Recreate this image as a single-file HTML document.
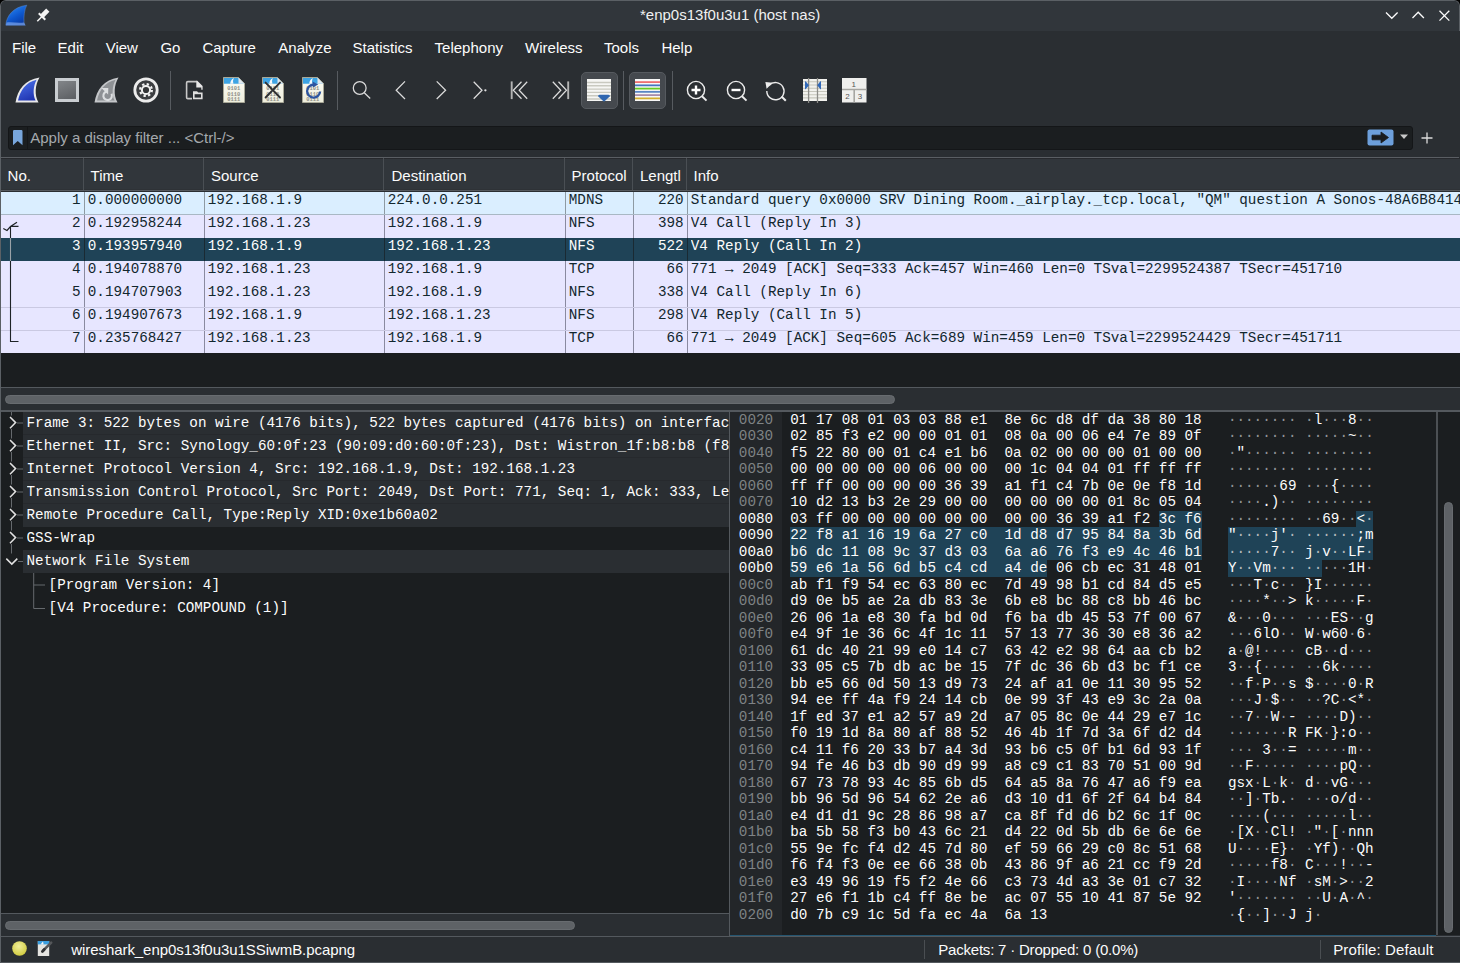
<!DOCTYPE html><html><head><meta charset="utf-8"><style>
*{margin:0;padding:0;box-sizing:border-box}
html,body{width:1460px;height:963px;overflow:hidden;background:#000}
body{position:relative;font-family:"Liberation Sans", sans-serif;color:#fcfcfc}
.a{position:absolute}
.m{font-family:"Liberation Mono", monospace;font-size:14.2977px;line-height:16.5px;white-space:pre}
i{font-style:normal;color:#909396}
.s{font-family:"Liberation Sans", sans-serif;font-size:15px;white-space:pre}
</style></head><body>
<div class="a" style="left:0;top:0;width:1460px;height:963px;background:#2a2e32;border-radius:6px 6px 0 0;border:1px solid #5b6065;border-bottom:none"></div>
<div class="a" style="left:1px;top:1px;width:1458px;height:30px;background:#31363b;border-radius:5px 5px 0 0"></div>
<div class="a" style="left:1459px;top:31px;width:1px;height:932px;background:#2a2e32"></div>
<div class="a s" style="left:640px;top:5.8px;font-size:15px;color:#eff0f1">*enp0s13f0u3u1 (host nas)</div>
<svg class="a" style="left:4px;top:3px" width="25" height="24" viewBox="0 0 25 24">
<defs><linearGradient id="fin" x1="0.2" y1="0" x2="0.8" y2="1"><stop offset="0" stop-color="#2a8af6"/><stop offset="0.55" stop-color="#0d56cc"/><stop offset="1" stop-color="#07349a"/></linearGradient></defs>
<path d="M1.8,22.2 C2.5,13 9,4 22.8,2.2 C20.3,6 19.6,14 20,19.5 C20.2,21 20.8,21.8 21.3,22.2 Z" fill="url(#fin)" stroke="#5a8ad0" stroke-width="0.5"/>
<path d="M2,22.2 L2.5,19.6 C8,18.8 14,20.4 20.1,19.4 L21.3,22.2Z" fill="#86aef0" opacity="0.65"/>
</svg>
<svg class="a" style="left:35px;top:7px" width="17" height="17" viewBox="35 7 17 17">
<path d="M37.3,21.2 L41.8,16.7" stroke="#f4f4f4" stroke-width="1.5"/>
<path d="M38.8,13.2 L45.3,19.7" stroke="#f4f4f4" stroke-width="2"/>
<path d="M42.2,15.8 L47.8,10.2" stroke="#f4f4f4" stroke-width="4.6"/>
</svg>
<svg class="a" style="left:1380px;top:5px" width="75" height="20" viewBox="0 0 75 20">
<path d="M6,7.5 L11.8,13.3 L17.6,7.5" stroke="#fcfcfc" stroke-width="1.3" fill="none"/>
<path d="M32.5,13 L38.2,7.2 L43.9,13" stroke="#fcfcfc" stroke-width="1.3" fill="none"/>
<path d="M59.5,5.8 L69.3,15.6 M69.3,5.8 L59.5,15.6" stroke="#fcfcfc" stroke-width="1.3" fill="none"/>
</svg>
<div class="a s" style="left:12.0px;top:38.7px;color:#fcfcfc">File</div>
<div class="a s" style="left:57.6px;top:38.7px;color:#fcfcfc">Edit</div>
<div class="a s" style="left:105.7px;top:38.7px;color:#fcfcfc">View</div>
<div class="a s" style="left:160.4px;top:38.7px;color:#fcfcfc">Go</div>
<div class="a s" style="left:202.4px;top:38.7px;color:#fcfcfc">Capture</div>
<div class="a s" style="left:278.3px;top:38.7px;color:#fcfcfc">Analyze</div>
<div class="a s" style="left:352.5px;top:38.7px;color:#fcfcfc">Statistics</div>
<div class="a s" style="left:434.6px;top:38.7px;color:#fcfcfc">Telephony</div>
<div class="a s" style="left:525.1px;top:38.7px;color:#fcfcfc">Wireless</div>
<div class="a s" style="left:604.0px;top:38.7px;color:#fcfcfc">Tools</div>
<div class="a s" style="left:661.4px;top:38.7px;color:#fcfcfc">Help</div>
<div class="a" style="left:170px;top:71px;width:1px;height:39px;background:#575b60"></div>
<div class="a" style="left:337px;top:71px;width:1px;height:39px;background:#575b60"></div>
<div class="a" style="left:623px;top:71px;width:1px;height:39px;background:#575b60"></div>
<div class="a" style="left:672px;top:71px;width:1px;height:39px;background:#575b60"></div>
<svg class="a" style="left:14px;top:76px" width="27" height="28" viewBox="0 0 27 28">
<defs><linearGradient id="fin2" x1="0.3" y1="0" x2="0.7" y2="1"><stop offset="0" stop-color="#4a70e8"/><stop offset="1" stop-color="#1f33b0"/></linearGradient></defs>
<path d="M1.5,26.5 C3.5,14 11,3.5 25.5,1.5 C21,9 20.3,19 24.5,26.5 Z" fill="#e8e8ea"/>
<path d="M4,24.5 C6,15 12,6 22.6,3.8 C19.2,10 18.6,19 21.6,24.5 Z" fill="url(#fin2)"/>
</svg>
<svg class="a" style="left:55px;top:78px" width="24" height="24" viewBox="0 0 24 24">
<defs><linearGradient id="stopg" x1="0.3" y1="0" x2="0.7" y2="1"><stop offset="0" stop-color="#7f8286"/><stop offset="1" stop-color="#5e6165"/></linearGradient></defs>
<rect x="0" y="0" width="24" height="24" fill="#c9cdd1"/>
<rect x="3" y="3" width="18" height="18" fill="url(#stopg)"/>
</svg>
<svg class="a" style="left:93px;top:76px" width="27" height="28" viewBox="0 0 27 28">
<path d="M1.5,26.5 C3.5,14 11,3.5 25.5,1.5 C21,9 20.3,19 24.5,26.5 Z" fill="#c4c6c9"/>
<path d="M4,24.5 C6,15 12,6 22.6,3.8 C19.2,10 18.6,19 21.6,24.5 Z" fill="#8e9195"/>
<path d="M14.5,15.4 A4.3,4.3 0 1 0 18.5,17.8" stroke="#dcdee0" stroke-width="2.1" fill="none"/>
<path d="M8.4,12 L15.3,12 L15.1,18.6Z" fill="#dcdee0"/>
</svg>
<svg class="a" style="left:133px;top:77px" width="26" height="26" viewBox="0 0 26 26">
<circle cx="13" cy="13" r="11.2" stroke="#ececec" stroke-width="2.8" fill="#3c3e41"/>
<circle cx="13" cy="13" r="5.9" stroke="#f2f2f2" stroke-width="2.2" fill="none" stroke-dasharray="2.3 2.33"/>
<circle cx="13" cy="13" r="4.1" stroke="#f2f2f2" stroke-width="2" fill="#333537"/>
</svg>
<svg class="a" style="left:185px;top:80px" width="18" height="20" viewBox="0 0 18 20">
<path d="M7,18.6 H2.8 Q1.6,18.6 1.6,17.4 V2.8 Q1.6,1.6 2.8,1.6 H11.8" stroke="#c8c8c8" stroke-width="1.6" fill="none"/>
<path d="M11.3,0.8 L12.3,0.8 L17.6,6.1 L17.6,9.8 L16.3,9.8 L16.3,7.6 L11.3,7.6Z" fill="#e8e8e8"/>
<path d="M8,19.2 V11.2 H12 L13.3,12.4 H17.6 V19.2 Z" fill="#e0e0e0"/>
<rect x="9.6" y="14.2" width="6.4" height="3.4" fill="#2a2e32"/>
</svg>
<svg class="a" style="left:223px;top:77px" width="23" height="26" viewBox="0 0 23 26">
<defs><linearGradient id="dg223" x1="0" y1="0" x2="0" y2="1"><stop offset="0" stop-color="#fdfdf6"/><stop offset="1" stop-color="#ededdc"/></linearGradient></defs>
<path d="M0.5,0.5 L15.5,0.5 L21.5,6.5 L21.5,25.5 L0.5,25.5 Z" fill="url(#dg223)" stroke="#a8a898" stroke-width="1"/>
<path d="M1,1 L15.3,1 L21,6.7 L1,6.7 Z" fill="#3ea4e4"/>
<path d="M7.2,6.7 Q7.6,2.6 10.8,1 Q9.4,4.2 10.4,6.7Z" fill="#f4f8fc"/>
<path d="M15.5,0.8 L15.5,6.7 L21.2,6.7Z" fill="#e2e8ee"/>
<g font-family="Liberation Mono" font-size="5.4" font-weight="bold" fill="#8e8e86"><text x="4.2" y="13.3">0101</text><text x="4.2" y="18.7">0110</text><text x="4.2" y="23.8">0111</text></g>
</svg>
<svg class="a" style="left:262px;top:77px" width="23" height="26" viewBox="0 0 23 26">
<defs><linearGradient id="dg262" x1="0" y1="0" x2="0" y2="1"><stop offset="0" stop-color="#fdfdf6"/><stop offset="1" stop-color="#ededdc"/></linearGradient></defs>
<path d="M0.5,0.5 L15.5,0.5 L21.5,6.5 L21.5,25.5 L0.5,25.5 Z" fill="url(#dg262)" stroke="#a8a898" stroke-width="1"/>
<path d="M1,1 L15.3,1 L21,6.7 L1,6.7 Z" fill="#3ea4e4"/>
<path d="M7.2,6.7 Q7.6,2.6 10.8,1 Q9.4,4.2 10.4,6.7Z" fill="#f4f8fc"/>
<path d="M15.5,0.8 L15.5,6.7 L21.2,6.7Z" fill="#e2e8ee"/>
<g font-family="Liberation Mono" font-size="5.4" font-weight="bold" fill="#8e8e86"><text x="4.2" y="13.3">0101</text><text x="4.2" y="18.7">0110</text><text x="4.2" y="23.8">0111</text></g>
<path d="M3.6,5.6 L18,20.5 M18,5.6 L3.6,20.5" stroke="#2e3032" stroke-width="1.9" stroke-linecap="round"/></svg>
<svg class="a" style="left:302px;top:77px" width="23" height="26" viewBox="0 0 23 26">
<defs><linearGradient id="dg302" x1="0" y1="0" x2="0" y2="1"><stop offset="0" stop-color="#fdfdf6"/><stop offset="1" stop-color="#ededdc"/></linearGradient></defs>
<path d="M0.5,0.5 L15.5,0.5 L21.5,6.5 L21.5,25.5 L0.5,25.5 Z" fill="url(#dg302)" stroke="#a8a898" stroke-width="1"/>
<path d="M1,1 L15.3,1 L21,6.7 L1,6.7 Z" fill="#3ea4e4"/>
<path d="M7.2,6.7 Q7.6,2.6 10.8,1 Q9.4,4.2 10.4,6.7Z" fill="#f4f8fc"/>
<path d="M15.5,0.8 L15.5,6.7 L21.2,6.7Z" fill="#e2e8ee"/>
<g font-family="Liberation Mono" font-size="5.4" font-weight="bold" fill="#8e8e86"><text x="4.2" y="13.3">0101</text><text x="4.2" y="18.7">0110</text><text x="4.2" y="23.8">0111</text></g>
<path d="M11.6,7.6 A6.5,6.5 0 1 0 18.1,14.5" stroke="#2c54a0" stroke-width="2.3" fill="none"/><path d="M10.6,4.4 L16.2,7.6 L10.8,10.6Z" fill="#2c54a0"/></svg>
<svg class="a" style="left:350px;top:78px" width="24" height="24" viewBox="0 0 24 24">
<circle cx="9.7" cy="10" r="6.4" stroke="#dcdcdc" stroke-width="1.25" fill="none"/><path d="M14.3,14.8 L20.2,20.5" stroke="#dcdcdc" stroke-width="1.25" fill="none" stroke-width="1.5"/></svg>
<svg class="a" style="left:390px;top:77.7px" width="24" height="24" viewBox="0 0 24 24"><path d="M15,3.4 L6.2,12.3 L15,21" stroke="#dcdcdc" stroke-width="1.25" fill="none"/></svg>
<svg class="a" style="left:430px;top:77.7px" width="24" height="24" viewBox="0 0 24 24"><path d="M6.7,3.4 L15.6,12.3 L6.7,21" stroke="#dcdcdc" stroke-width="1.25" fill="none"/></svg>
<svg class="a" style="left:468px;top:77.7px" width="24" height="24" viewBox="0 0 24 24"><path d="M5.7,3.8 L14,12.3 L5.7,20.8" stroke="#dcdcdc" stroke-width="1.25" fill="none"/><circle cx="17.4" cy="12.3" r="1.15" fill="#e0e0e0"/></svg>
<svg class="a" style="left:508px;top:77.7px" width="24" height="24" viewBox="0 0 24 24"><path d="M3.7,3.4 V21.1" stroke="#b4b4b4" stroke-width="1.9"/><path d="M13.5,3.8 L5.3,12.3 L13.5,20.8 M19.2,3.8 L11.2,12.3 L19.2,20.8" stroke="#dcdcdc" stroke-width="1.25" fill="none"/></svg>
<svg class="a" style="left:549px;top:77.7px" width="24" height="24" viewBox="0 0 24 24"><path d="M19.2,3.4 V21.1" stroke="#b4b4b4" stroke-width="1.9"/><path d="M3.8,3.8 L11.8,12.3 L3.8,20.8 M9.5,3.8 L17.5,12.3 L9.5,20.8" stroke="#dcdcdc" stroke-width="1.25" fill="none"/></svg>
<div class="a" style="left:581px;top:72px;width:37px;height:37px;border-radius:5px;background:#45494e;border:1px solid #565a5f"></div>
<div class="a" style="left:629px;top:72px;width:37px;height:37px;border-radius:5px;background:#45494e;border:1px solid #565a5f"></div>
<svg class="a" style="left:587px;top:79px" width="24" height="23" viewBox="0 0 24 23">
<rect x="0" y="0" width="24" height="22" fill="#f6f6f4"/>
<g stroke="#c9c9c0" stroke-width="1.4"><path d="M0,3.5 H24 M0,6.8 H24 M0,10.1 H24 M0,13.4 H24 M0,16.7 H24 M0,20 H24"/></g>
<path d="M11,17.3 Q11,15.8 12.5,15.8 L21.5,15.8 Q23,15.8 23,17.3 L17,22.8 Z" fill="#2f66b0"/>
</svg>
<svg class="a" style="left:635px;top:79px" width="25" height="23" viewBox="0 0 25 23">
<rect x="0" y="0" width="25" height="22" fill="#f8f8f8"/>
<g stroke-width="1.8"><path d="M0,3.1 H25" stroke="#ee7070"/><path d="M0,6.35 H25" stroke="#4576c0"/><path d="M0,9.6 H25" stroke="#66cc22"/><path d="M0,12.85 H25" stroke="#5a86c4"/><path d="M0,16.1 H25" stroke="#a88cac"/><path d="M0,19.4 H25" stroke="#d4ae2e"/></g>
</svg>
<svg class="a" style="left:684px;top:78px" width="26" height="26" viewBox="0 0 26 26">
<circle cx="12" cy="12" r="8.6" stroke="#ececec" stroke-width="1.4" fill="none"/><path d="M18,18.2 L22.5,22.6" stroke="#ececec" stroke-width="2" /><path d="M7.5,12 H16.5 M12,7.5 V16.5" stroke="#ffffff" stroke-width="2.4"/></svg>
<svg class="a" style="left:724px;top:78px" width="26" height="26" viewBox="0 0 26 26">
<circle cx="12" cy="12" r="8.6" stroke="#ececec" stroke-width="1.4" fill="none"/><path d="M18,18.2 L22.5,22.6" stroke="#ececec" stroke-width="2" /><path d="M7.5,12 H16.5" stroke="#ffffff" stroke-width="2.4"/></svg>
<svg class="a" style="left:763px;top:78px" width="26" height="26" viewBox="0 0 26 26">
<path d="M6.2,7.2 A8.6,8.6 0 1 1 3.8,13" stroke="#ececec" stroke-width="1.4" fill="none"/><path d="M18.5,18.5 L22.8,22.8" stroke="#ececec" stroke-width="2"/><path d="M2.4,4 L9.8,4.8 L3.6,10.8Z" fill="#ececec"/></svg>
<svg class="a" style="left:802px;top:78px" width="26" height="25" viewBox="0 0 26 25">
<rect x="1" y="1" width="24" height="22" fill="#f2f2ee"/>
<g stroke="#c6c6bc" stroke-width="1.1"><path d="M1,3.8 H25 M1,7 H25 M1,10.3 H25 M1,13.5 H25 M1,16.7 H25 M1,19.9 H25"/></g>
<path d="M6.6,0 V25 M15.5,0 V25" stroke="#8c8c88" stroke-width="1.3"/>
<path d="M3,3.5 Q3,3 3.6,3.3 L7,7.3 L3.6,11.2 Q3,11.5 3,11Z M19,3.5 Q19,3 18.4,3.3 L15.2,7.3 L18.4,11.2 Q19,11.5 19,11Z" fill="#3068b8"/>
</svg>
<svg class="a" style="left:841px;top:77px" width="26" height="26" viewBox="0 0 26 26">
<rect x="1" y="1" width="24.5" height="24.5" fill="#efefed"/>
<path d="M1,12.5 H25.5 M13.2,12.5 V25.5" stroke="#a6a6a2" stroke-width="1.6"/>
<g font-family="Liberation Sans" font-size="8" fill="#555"><text x="10.5" y="9.5">1</text><text x="4.3" y="22">2</text><text x="16.8" y="22">3</text></g>
</svg>
<div class="a" style="left:8px;top:126px;width:1405px;height:24px;background:#1b1e20;border:1px solid #141618;border-radius:3px"></div>
<div class="a" style="left:27px;top:127px;width:1px;height:22px;background:#141618"></div>
<svg class="a" style="left:13px;top:130px" width="10" height="16" viewBox="0 0 10 16"><path d="M0,1.2 Q0,0 1.2,0 H8.3 Q9.5,0 9.5,1.2 V15.2 L4.75,11 L0,15.2Z" fill="#78a6dc"/></svg>
<div class="a s" style="left:30.2px;top:129px;color:#a5a9ad">Apply a display filter ... &lt;Ctrl-/&gt;</div>
<svg class="a" style="left:1367px;top:129px" width="27" height="17" viewBox="0 0 27 17"><rect x="0.5" y="0.5" width="26" height="16" rx="2" fill="#6d9fdb"/><path d="M5,6.2 H14 V3 L21.5,8.5 L14,14 V10.8 H5Z" fill="#1a1c1e" stroke="#1a1c1e" stroke-width="0.8" stroke-linejoin="round"/></svg>
<svg class="a" style="left:1399px;top:134px" width="10" height="6" viewBox="0 0 10 6"><path d="M1,0.5 H9 L5,5Z" fill="#c8c8c8"/></svg>
<svg class="a" style="left:1420px;top:131px" width="14" height="14" viewBox="0 0 14 14"><path d="M1.5,7 H12.5 M7,1.5 V12.5" stroke="#dcdcdc" stroke-width="1.3"/></svg>
<div class="a" style="left:1px;top:157px;width:1458px;height:1px;background:#5a5e63"></div>
<div class="a" style="left:1px;top:158px;width:1459px;height:32px;background:#31363b"></div>
<div class="a" style="left:1px;top:158px;width:1459px;height:1px;background:#27292d"></div>
<div class="a" style="left:1px;top:189px;width:1459px;height:1px;background:#2e3236"></div>
<div class="a" style="left:1px;top:190px;width:1459px;height:1px;background:#55595e"></div>
<div class="a" style="left:1px;top:191px;width:1459px;height:1px;background:#2a2e32"></div>
<div class="a" style="left:83px;top:158px;width:1px;height:32px;background:#4a4f54"></div>
<div class="a" style="left:203px;top:158px;width:1px;height:32px;background:#4a4f54"></div>
<div class="a" style="left:383px;top:158px;width:1px;height:32px;background:#4a4f54"></div>
<div class="a" style="left:564px;top:158px;width:1px;height:32px;background:#4a4f54"></div>
<div class="a" style="left:632px;top:158px;width:1px;height:32px;background:#4a4f54"></div>
<div class="a" style="left:686px;top:158px;width:1px;height:32px;background:#4a4f54"></div>
<div class="a s" style="left:7.6px;top:166.6px;color:#fcfcfc">No.</div>
<div class="a s" style="left:90.6px;top:166.6px;color:#fcfcfc">Time</div>
<div class="a s" style="left:211.0px;top:166.6px;color:#fcfcfc">Source</div>
<div class="a s" style="left:391.5px;top:166.6px;color:#fcfcfc">Destination</div>
<div class="a s" style="left:571.6px;top:166.6px;color:#fcfcfc">Protocol</div>
<div class="a s" style="left:640.0px;top:166.6px;color:#fcfcfc">Lengtl</div>
<div class="a s" style="left:693.6px;top:166.6px;color:#fcfcfc">Info</div>
<div class="a" style="left:1px;top:192px;width:1459px;height:195px;background:#1b1e20"></div>
<div class="a" style="left:1px;top:192px;width:1459px;height:23px;background:#daeeff"></div>
<div class="a" style="left:84px;top:192px;width:1px;height:23px;background:#8e9aa3"></div>
<div class="a" style="left:204px;top:192px;width:1px;height:23px;background:#8e9aa3"></div>
<div class="a" style="left:384px;top:192px;width:1px;height:23px;background:#8e9aa3"></div>
<div class="a" style="left:565px;top:192px;width:1px;height:23px;background:#8e9aa3"></div>
<div class="a" style="left:633px;top:192px;width:1px;height:23px;background:#8e9aa3"></div>
<div class="a" style="left:687px;top:192px;width:1px;height:23px;background:#8e9aa3"></div>
<div class="a m" style="left:1px;width:79.7px;text-align:right;top:191.9px;color:#12272e">1</div>
<div class="a m" style="left:87.8px;top:191.9px;color:#12272e">0.000000000</div>
<div class="a m" style="left:207.8px;top:191.9px;color:#12272e">192.168.1.9</div>
<div class="a m" style="left:387.8px;top:191.9px;color:#12272e">224.0.0.251</div>
<div class="a m" style="left:568.8px;top:191.9px;color:#12272e">MDNS</div>
<div class="a m" style="left:634px;width:49.7px;text-align:right;top:191.9px;color:#12272e">220</div>
<div class="a m" style="left:690.8px;top:191.9px;width:770px;overflow:hidden;color:#12272e">Standard query 0x0000 SRV Dining Room._airplay._tcp.local, &quot;QM&quot; question A Sonos-48A6B8414D4A.local, &quot;QM&quot; question AAAA</div>
<div class="a" style="left:1px;top:215px;width:1459px;height:23px;background:#e7e6ff"></div>
<div class="a" style="left:84px;top:215px;width:1px;height:23px;background:#8a8aa0"></div>
<div class="a" style="left:204px;top:215px;width:1px;height:23px;background:#8a8aa0"></div>
<div class="a" style="left:384px;top:215px;width:1px;height:23px;background:#8a8aa0"></div>
<div class="a" style="left:565px;top:215px;width:1px;height:23px;background:#8a8aa0"></div>
<div class="a" style="left:633px;top:215px;width:1px;height:23px;background:#8a8aa0"></div>
<div class="a" style="left:687px;top:215px;width:1px;height:23px;background:#8a8aa0"></div>
<div class="a m" style="left:1px;width:79.7px;text-align:right;top:214.9px;color:#12272e">2</div>
<div class="a m" style="left:87.8px;top:214.9px;color:#12272e">0.192958244</div>
<div class="a m" style="left:207.8px;top:214.9px;color:#12272e">192.168.1.23</div>
<div class="a m" style="left:387.8px;top:214.9px;color:#12272e">192.168.1.9</div>
<div class="a m" style="left:568.8px;top:214.9px;color:#12272e">NFS</div>
<div class="a m" style="left:634px;width:49.7px;text-align:right;top:214.9px;color:#12272e">398</div>
<div class="a m" style="left:690.8px;top:214.9px;width:770px;overflow:hidden;color:#12272e">V4 Call (Reply In 3)</div>
<div class="a" style="left:1px;top:238px;width:1459px;height:23px;background:#1f4357"></div>
<div class="a" style="left:84px;top:238px;width:1px;height:23px;background:#1a2a33"></div>
<div class="a" style="left:204px;top:238px;width:1px;height:23px;background:#1a2a33"></div>
<div class="a" style="left:384px;top:238px;width:1px;height:23px;background:#1a2a33"></div>
<div class="a" style="left:565px;top:238px;width:1px;height:23px;background:#1a2a33"></div>
<div class="a" style="left:633px;top:238px;width:1px;height:23px;background:#1a2a33"></div>
<div class="a" style="left:687px;top:238px;width:1px;height:23px;background:#1a2a33"></div>
<div class="a m" style="left:1px;width:79.7px;text-align:right;top:237.9px;color:#fcfcfc">3</div>
<div class="a m" style="left:87.8px;top:237.9px;color:#fcfcfc">0.193957940</div>
<div class="a m" style="left:207.8px;top:237.9px;color:#fcfcfc">192.168.1.9</div>
<div class="a m" style="left:387.8px;top:237.9px;color:#fcfcfc">192.168.1.23</div>
<div class="a m" style="left:568.8px;top:237.9px;color:#fcfcfc">NFS</div>
<div class="a m" style="left:634px;width:49.7px;text-align:right;top:237.9px;color:#fcfcfc">522</div>
<div class="a m" style="left:690.8px;top:237.9px;width:770px;overflow:hidden;color:#fcfcfc">V4 Reply (Call In 2)</div>
<div class="a" style="left:1px;top:261px;width:1459px;height:23px;background:#e7e6ff"></div>
<div class="a" style="left:84px;top:261px;width:1px;height:23px;background:#8a8aa0"></div>
<div class="a" style="left:204px;top:261px;width:1px;height:23px;background:#8a8aa0"></div>
<div class="a" style="left:384px;top:261px;width:1px;height:23px;background:#8a8aa0"></div>
<div class="a" style="left:565px;top:261px;width:1px;height:23px;background:#8a8aa0"></div>
<div class="a" style="left:633px;top:261px;width:1px;height:23px;background:#8a8aa0"></div>
<div class="a" style="left:687px;top:261px;width:1px;height:23px;background:#8a8aa0"></div>
<div class="a m" style="left:1px;width:79.7px;text-align:right;top:260.9px;color:#12272e">4</div>
<div class="a m" style="left:87.8px;top:260.9px;color:#12272e">0.194078870</div>
<div class="a m" style="left:207.8px;top:260.9px;color:#12272e">192.168.1.23</div>
<div class="a m" style="left:387.8px;top:260.9px;color:#12272e">192.168.1.9</div>
<div class="a m" style="left:568.8px;top:260.9px;color:#12272e">TCP</div>
<div class="a m" style="left:634px;width:49.7px;text-align:right;top:260.9px;color:#12272e">66</div>
<div class="a m" style="left:690.8px;top:260.9px;width:770px;overflow:hidden;color:#12272e">771 → 2049 [ACK] Seq=333 Ack=457 Win=460 Len=0 TSval=2299524387 TSecr=451710</div>
<div class="a" style="left:1px;top:284px;width:1459px;height:23px;background:#e7e6ff"></div>
<div class="a" style="left:84px;top:284px;width:1px;height:23px;background:#8a8aa0"></div>
<div class="a" style="left:204px;top:284px;width:1px;height:23px;background:#8a8aa0"></div>
<div class="a" style="left:384px;top:284px;width:1px;height:23px;background:#8a8aa0"></div>
<div class="a" style="left:565px;top:284px;width:1px;height:23px;background:#8a8aa0"></div>
<div class="a" style="left:633px;top:284px;width:1px;height:23px;background:#8a8aa0"></div>
<div class="a" style="left:687px;top:284px;width:1px;height:23px;background:#8a8aa0"></div>
<div class="a m" style="left:1px;width:79.7px;text-align:right;top:283.9px;color:#12272e">5</div>
<div class="a m" style="left:87.8px;top:283.9px;color:#12272e">0.194707903</div>
<div class="a m" style="left:207.8px;top:283.9px;color:#12272e">192.168.1.23</div>
<div class="a m" style="left:387.8px;top:283.9px;color:#12272e">192.168.1.9</div>
<div class="a m" style="left:568.8px;top:283.9px;color:#12272e">NFS</div>
<div class="a m" style="left:634px;width:49.7px;text-align:right;top:283.9px;color:#12272e">338</div>
<div class="a m" style="left:690.8px;top:283.9px;width:770px;overflow:hidden;color:#12272e">V4 Call (Reply In 6)</div>
<div class="a" style="left:1px;top:307px;width:1459px;height:23px;background:#e7e6ff"></div>
<div class="a" style="left:84px;top:307px;width:1px;height:23px;background:#8a8aa0"></div>
<div class="a" style="left:204px;top:307px;width:1px;height:23px;background:#8a8aa0"></div>
<div class="a" style="left:384px;top:307px;width:1px;height:23px;background:#8a8aa0"></div>
<div class="a" style="left:565px;top:307px;width:1px;height:23px;background:#8a8aa0"></div>
<div class="a" style="left:633px;top:307px;width:1px;height:23px;background:#8a8aa0"></div>
<div class="a" style="left:687px;top:307px;width:1px;height:23px;background:#8a8aa0"></div>
<div class="a m" style="left:1px;width:79.7px;text-align:right;top:306.9px;color:#12272e">6</div>
<div class="a m" style="left:87.8px;top:306.9px;color:#12272e">0.194907673</div>
<div class="a m" style="left:207.8px;top:306.9px;color:#12272e">192.168.1.9</div>
<div class="a m" style="left:387.8px;top:306.9px;color:#12272e">192.168.1.23</div>
<div class="a m" style="left:568.8px;top:306.9px;color:#12272e">NFS</div>
<div class="a m" style="left:634px;width:49.7px;text-align:right;top:306.9px;color:#12272e">298</div>
<div class="a m" style="left:690.8px;top:306.9px;width:770px;overflow:hidden;color:#12272e">V4 Reply (Call In 5)</div>
<div class="a" style="left:1px;top:330px;width:1459px;height:23px;background:#e7e6ff"></div>
<div class="a" style="left:84px;top:330px;width:1px;height:23px;background:#8a8aa0"></div>
<div class="a" style="left:204px;top:330px;width:1px;height:23px;background:#8a8aa0"></div>
<div class="a" style="left:384px;top:330px;width:1px;height:23px;background:#8a8aa0"></div>
<div class="a" style="left:565px;top:330px;width:1px;height:23px;background:#8a8aa0"></div>
<div class="a" style="left:633px;top:330px;width:1px;height:23px;background:#8a8aa0"></div>
<div class="a" style="left:687px;top:330px;width:1px;height:23px;background:#8a8aa0"></div>
<div class="a m" style="left:1px;width:79.7px;text-align:right;top:329.9px;color:#12272e">7</div>
<div class="a m" style="left:87.8px;top:329.9px;color:#12272e">0.235768427</div>
<div class="a m" style="left:207.8px;top:329.9px;color:#12272e">192.168.1.23</div>
<div class="a m" style="left:387.8px;top:329.9px;color:#12272e">192.168.1.9</div>
<div class="a m" style="left:568.8px;top:329.9px;color:#12272e">TCP</div>
<div class="a m" style="left:634px;width:49.7px;text-align:right;top:329.9px;color:#12272e">66</div>
<div class="a m" style="left:690.8px;top:329.9px;width:770px;overflow:hidden;color:#12272e">771 → 2049 [ACK] Seq=605 Ack=689 Win=459 Len=0 TSval=2299524429 TSecr=451711</div>
<div class="a" style="left:1px;top:214px;width:1459px;height:1px;background:#a9b8c4"></div>
<div class="a" style="left:1px;top:307px;width:1459px;height:1px;background:#cac9e2"></div>
<div class="a" style="left:1px;top:330px;width:1459px;height:1px;background:#cac9e2"></div>
<svg class="a" style="left:0;top:215px" width="22" height="140" viewBox="0 0 22 140">
<path d="M3.3,13.5 L7,15.5 L10.5,11.5 L17,7.3 M11,11.3 H18.5" stroke="#1e2326" stroke-width="1.2" fill="none"/>
<path d="M10.5,11.5 V23" stroke="#1e2326" stroke-width="1.1"/>
<path d="M10.5,23 V46" stroke="#9aa2a8" stroke-width="1.1"/>
<path d="M10.5,46 V126.5 H18.5" stroke="#1e2326" stroke-width="1.1" fill="none"/>
</svg>
<div class="a" style="left:1px;top:387px;width:1459px;height:1px;background:#54595e"></div>
<div class="a" style="left:1px;top:388px;width:1459px;height:22px;background:#2a2e32"></div>
<div class="a" style="left:5px;top:395px;width:890px;height:9px;border-radius:4.5px;background:#5e6266;border:1px solid #686c70"></div>
<div class="a" style="left:1px;top:410px;width:1459px;height:2px;background:#54595e"></div>
<div class="a" style="left:1px;top:412px;width:728px;height:501px;background:#1b1e20"></div>
<div class="a" style="left:23px;top:412px;width:706px;height:23px;background:#2a2e32"></div>
<div class="a m" style="left:26.5px;top:415.1px;width:702.5px;overflow:hidden;color:#fcfcfc">Frame 3: 522 bytes on wire (4176 bits), 522 bytes captured (4176 bits) on interface enp0s13f0u3u1, id 0</div>
<div class="a" style="left:23px;top:435px;width:706px;height:23px;background:#2a2e32"></div>
<div class="a m" style="left:26.5px;top:438.1px;width:702.5px;overflow:hidden;color:#fcfcfc">Ethernet II, Src: Synology_60:0f:23 (90:09:d0:60:0f:23), Dst: Wistron_1f:b8:b8 (f8:0f:41:1f:b8:b8)</div>
<div class="a" style="left:23px;top:458px;width:706px;height:23px;background:#2a2e32"></div>
<div class="a m" style="left:26.5px;top:461.1px;width:702.5px;overflow:hidden;color:#fcfcfc">Internet Protocol Version 4, Src: 192.168.1.9, Dst: 192.168.1.23</div>
<div class="a" style="left:23px;top:481px;width:706px;height:23px;background:#2a2e32"></div>
<div class="a m" style="left:26.5px;top:484.1px;width:702.5px;overflow:hidden;color:#fcfcfc">Transmission Control Protocol, Src Port: 2049, Dst Port: 771, Seq: 1, Ack: 333, Len: 456</div>
<div class="a" style="left:23px;top:504px;width:706px;height:23px;background:#2a2e32"></div>
<div class="a m" style="left:26.5px;top:507.1px;width:702.5px;overflow:hidden;color:#fcfcfc">Remote Procedure Call, Type:Reply XID:0xe1b60a02</div>
<div class="a m" style="left:26.5px;top:530.1px;width:702.5px;overflow:hidden;color:#fcfcfc">GSS-Wrap</div>
<div class="a" style="left:23px;top:550px;width:706px;height:23px;background:#2a2e32"></div>
<div class="a m" style="left:26.5px;top:553.1px;width:702.5px;overflow:hidden;color:#fcfcfc">Network File System</div>
<div class="a m" style="left:48.6px;top:577.1px;color:#fcfcfc">[Program Version: 4]</div>
<div class="a m" style="left:48.6px;top:600.1px;color:#fcfcfc">[V4 Procedure: COMPOUND (1)]</div>
<svg class="a" style="left:0;top:412px" width="50" height="200" viewBox="0 412 50 200">
<path d="M11.5,412 V415.5 M11.5,429 V438.5 M11.5,452 V461.5 M11.5,475 V484.5 M11.5,498 V507.5 M11.5,521 V530.5 M11.5,544 V553.5" stroke="#65696d" stroke-width="1" fill="none"/>
<g stroke="#e2e2e2" stroke-width="1.5" fill="none"><path d="M10,417 L15.6,422.6 L10,428.2"/><path d="M10,440 L15.6,445.6 L10,451.2"/><path d="M10,463 L15.6,468.6 L10,474.2"/><path d="M10,486 L15.6,491.6 L10,497.2"/><path d="M10,509 L15.6,514.6 L10,520.2"/><path d="M10,532 L15.6,537.6 L10,543.2"/>
<path d="M6.3,558.6 L11.8,564.1 L17.3,558.6"/>
</g>
<g stroke="#65696d" stroke-width="1" fill="none">
<path d="M17,423 H23 M17,446 H23 M17,469 H23 M17,492 H23 M17,515 H23 M17,538 H23 M18,561.5 H23"/>
<path d="M33.7,573 V608.5 H45 M33.7,585 H45"/>
</g>
</svg>
<div class="a" style="left:23px;top:434px;width:706px;height:1px;background:#26292d"></div>
<div class="a" style="left:23px;top:457px;width:706px;height:1px;background:#26292d"></div>
<div class="a" style="left:23px;top:480px;width:706px;height:1px;background:#26292d"></div>
<div class="a" style="left:23px;top:503px;width:706px;height:1px;background:#26292d"></div>
<div class="a" style="left:1px;top:913px;width:729px;height:1px;background:#54595e"></div>
<div class="a" style="left:1px;top:914px;width:729px;height:22px;background:#2a2e32"></div>
<div class="a" style="left:5px;top:921px;width:570px;height:9px;border-radius:4.5px;background:#5e6266;border:1px solid #686c70"></div>
<div class="a" style="left:729px;top:412px;width:1px;height:524px;background:#54595e"></div>
<div class="a" style="left:730px;top:412px;width:730px;height:523px;background:#1b1e20"></div>
<div class="a" style="left:730px;top:412px;width:52px;height:523px;background:#232629"></div>
<div class="a" style="left:730px;top:935px;width:706px;height:1px;background:#245570"></div>
<div class="a" style="left:1436px;top:412px;width:2px;height:523px;background:#4c5054"></div>
<div class="a" style="left:1444px;top:502px;width:9px;height:431px;border-radius:4.5px;background:#5e6266;border:1px solid #686c70"></div>
<div class="a m" style="left:738.82px;top:411.50px;color:#7f8385">0020</div>
<div class="a m" style="left:790.30px;top:411.50px;color:#fcfcfc">01 17 08 01 03 03 88 e1  8e 6c d8 df da 38 80 18</div>
<div class="a m" style="left:1227.88px;top:411.50px;color:#fcfcfc"><i>·</i><i>·</i><i>·</i><i>·</i><i>·</i><i>·</i><i>·</i><i>·</i> <i>·</i>l<i>·</i><i>·</i><i>·</i>8<i>·</i><i>·</i></div>
<div class="a m" style="left:738.82px;top:428.00px;color:#7f8385">0030</div>
<div class="a m" style="left:790.30px;top:428.00px;color:#fcfcfc">02 85 f3 e2 00 00 01 01  08 0a 00 06 e4 7e 89 0f</div>
<div class="a m" style="left:1227.88px;top:428.00px;color:#fcfcfc"><i>·</i><i>·</i><i>·</i><i>·</i><i>·</i><i>·</i><i>·</i><i>·</i> <i>·</i><i>·</i><i>·</i><i>·</i><i>·</i>~<i>·</i><i>·</i></div>
<div class="a m" style="left:738.82px;top:444.50px;color:#7f8385">0040</div>
<div class="a m" style="left:790.30px;top:444.50px;color:#fcfcfc">f5 22 80 00 01 c4 e1 b6  0a 02 00 00 00 01 00 00</div>
<div class="a m" style="left:1227.88px;top:444.50px;color:#fcfcfc"><i>·</i>&quot;<i>·</i><i>·</i><i>·</i><i>·</i><i>·</i><i>·</i> <i>·</i><i>·</i><i>·</i><i>·</i><i>·</i><i>·</i><i>·</i><i>·</i></div>
<div class="a m" style="left:738.82px;top:461.00px;color:#7f8385">0050</div>
<div class="a m" style="left:790.30px;top:461.00px;color:#fcfcfc">00 00 00 00 00 06 00 00  00 1c 04 04 01 ff ff ff</div>
<div class="a m" style="left:1227.88px;top:461.00px;color:#fcfcfc"><i>·</i><i>·</i><i>·</i><i>·</i><i>·</i><i>·</i><i>·</i><i>·</i> <i>·</i><i>·</i><i>·</i><i>·</i><i>·</i><i>·</i><i>·</i><i>·</i></div>
<div class="a m" style="left:738.82px;top:477.50px;color:#7f8385">0060</div>
<div class="a m" style="left:790.30px;top:477.50px;color:#fcfcfc">ff ff 00 00 00 00 36 39  a1 f1 c4 7b 0e 0e f8 1d</div>
<div class="a m" style="left:1227.88px;top:477.50px;color:#fcfcfc"><i>·</i><i>·</i><i>·</i><i>·</i><i>·</i><i>·</i>69 <i>·</i><i>·</i><i>·</i>{<i>·</i><i>·</i><i>·</i><i>·</i></div>
<div class="a m" style="left:738.82px;top:494.00px;color:#7f8385">0070</div>
<div class="a m" style="left:790.30px;top:494.00px;color:#fcfcfc">10 d2 13 b3 2e 29 00 00  00 00 00 00 01 8c 05 04</div>
<div class="a m" style="left:1227.88px;top:494.00px;color:#fcfcfc"><i>·</i><i>·</i><i>·</i><i>·</i>.)<i>·</i><i>·</i> <i>·</i><i>·</i><i>·</i><i>·</i><i>·</i><i>·</i><i>·</i><i>·</i></div>
<div class="a" style="left:1158.94px;top:510.50px;width:42.90px;height:16.5px;background:#1f4357"></div>
<div class="a" style="left:1356.28px;top:510.50px;width:17.16px;height:16.5px;background:#1f4357"></div>
<div class="a m" style="left:738.82px;top:510.50px;color:#fcfcfc">0080</div>
<div class="a m" style="left:790.30px;top:510.50px;color:#fcfcfc">03 ff 00 00 00 00 00 00  00 00 36 39 a1 f2 3c f6</div>
<div class="a m" style="left:1227.88px;top:510.50px;color:#fcfcfc"><i>·</i><i>·</i><i>·</i><i>·</i><i>·</i><i>·</i><i>·</i><i>·</i> <i>·</i><i>·</i>69<i>·</i><i>·</i>&lt;<i style="color:#b4b8bc">·</i></div>
<div class="a" style="left:790.00px;top:527.00px;width:411.84px;height:16.5px;background:#1f4357"></div>
<div class="a" style="left:1227.58px;top:527.00px;width:145.86px;height:16.5px;background:#1f4357"></div>
<div class="a m" style="left:738.82px;top:527.00px;color:#fcfcfc">0090</div>
<div class="a m" style="left:790.30px;top:527.00px;color:#fcfcfc">22 f8 a1 16 19 6a 27 c0  1d d8 d7 95 84 8a 3b 6d</div>
<div class="a m" style="left:1227.88px;top:527.00px;color:#fcfcfc">&quot;<i style="color:#b4b8bc">·</i><i style="color:#b4b8bc">·</i><i style="color:#b4b8bc">·</i><i style="color:#b4b8bc">·</i>j&#x27;<i style="color:#b4b8bc">·</i> <i style="color:#b4b8bc">·</i><i style="color:#b4b8bc">·</i><i style="color:#b4b8bc">·</i><i style="color:#b4b8bc">·</i><i style="color:#b4b8bc">·</i><i style="color:#b4b8bc">·</i>;m</div>
<div class="a" style="left:790.00px;top:543.50px;width:411.84px;height:16.5px;background:#1f4357"></div>
<div class="a" style="left:1227.58px;top:543.50px;width:145.86px;height:16.5px;background:#1f4357"></div>
<div class="a m" style="left:738.82px;top:543.50px;color:#fcfcfc">00a0</div>
<div class="a m" style="left:790.30px;top:543.50px;color:#fcfcfc">b6 dc 11 08 9c 37 d3 03  6a a6 76 f3 e9 4c 46 b1</div>
<div class="a m" style="left:1227.88px;top:543.50px;color:#fcfcfc"><i style="color:#b4b8bc">·</i><i style="color:#b4b8bc">·</i><i style="color:#b4b8bc">·</i><i style="color:#b4b8bc">·</i><i style="color:#b4b8bc">·</i>7<i style="color:#b4b8bc">·</i><i style="color:#b4b8bc">·</i> j<i style="color:#b4b8bc">·</i>v<i style="color:#b4b8bc">·</i><i style="color:#b4b8bc">·</i>LF<i style="color:#b4b8bc">·</i></div>
<div class="a" style="left:790.00px;top:560.00px;width:257.40px;height:16.5px;background:#1f4357"></div>
<div class="a" style="left:1227.58px;top:560.00px;width:94.38px;height:16.5px;background:#1f4357"></div>
<div class="a m" style="left:738.82px;top:560.00px;color:#fcfcfc">00b0</div>
<div class="a m" style="left:790.30px;top:560.00px;color:#fcfcfc">59 e6 1a 56 6d b5 c4 cd  a4 de 06 cb ec 31 48 01</div>
<div class="a m" style="left:1227.88px;top:560.00px;color:#fcfcfc">Y<i style="color:#b4b8bc">·</i><i style="color:#b4b8bc">·</i>Vm<i style="color:#b4b8bc">·</i><i style="color:#b4b8bc">·</i><i style="color:#b4b8bc">·</i> <i style="color:#b4b8bc">·</i><i style="color:#b4b8bc">·</i><i>·</i><i>·</i><i>·</i>1H<i>·</i></div>
<div class="a m" style="left:738.82px;top:576.50px;color:#7f8385">00c0</div>
<div class="a m" style="left:790.30px;top:576.50px;color:#fcfcfc">ab f1 f9 54 ec 63 80 ec  7d 49 98 b1 cd 84 d5 e5</div>
<div class="a m" style="left:1227.88px;top:576.50px;color:#fcfcfc"><i>·</i><i>·</i><i>·</i>T<i>·</i>c<i>·</i><i>·</i> }I<i>·</i><i>·</i><i>·</i><i>·</i><i>·</i><i>·</i></div>
<div class="a m" style="left:738.82px;top:593.00px;color:#7f8385">00d0</div>
<div class="a m" style="left:790.30px;top:593.00px;color:#fcfcfc">d9 0e b5 ae 2a db 83 3e  6b e8 bc 88 c8 bb 46 bc</div>
<div class="a m" style="left:1227.88px;top:593.00px;color:#fcfcfc"><i>·</i><i>·</i><i>·</i><i>·</i>*<i>·</i><i>·</i>&gt; k<i>·</i><i>·</i><i>·</i><i>·</i><i>·</i>F<i>·</i></div>
<div class="a m" style="left:738.82px;top:609.50px;color:#7f8385">00e0</div>
<div class="a m" style="left:790.30px;top:609.50px;color:#fcfcfc">26 06 1a e8 30 fa bd 0d  f6 ba db 45 53 7f 00 67</div>
<div class="a m" style="left:1227.88px;top:609.50px;color:#fcfcfc">&amp;<i>·</i><i>·</i><i>·</i>0<i>·</i><i>·</i><i>·</i> <i>·</i><i>·</i><i>·</i>ES<i>·</i><i>·</i>g</div>
<div class="a m" style="left:738.82px;top:626.00px;color:#7f8385">00f0</div>
<div class="a m" style="left:790.30px;top:626.00px;color:#fcfcfc">e4 9f 1e 36 6c 4f 1c 11  57 13 77 36 30 e8 36 a2</div>
<div class="a m" style="left:1227.88px;top:626.00px;color:#fcfcfc"><i>·</i><i>·</i><i>·</i>6lO<i>·</i><i>·</i> W<i>·</i>w60<i>·</i>6<i>·</i></div>
<div class="a m" style="left:738.82px;top:642.50px;color:#7f8385">0100</div>
<div class="a m" style="left:790.30px;top:642.50px;color:#fcfcfc">61 dc 40 21 99 e0 14 c7  63 42 e2 98 64 aa cb b2</div>
<div class="a m" style="left:1227.88px;top:642.50px;color:#fcfcfc">a<i>·</i>@!<i>·</i><i>·</i><i>·</i><i>·</i> cB<i>·</i><i>·</i>d<i>·</i><i>·</i><i>·</i></div>
<div class="a m" style="left:738.82px;top:659.00px;color:#7f8385">0110</div>
<div class="a m" style="left:790.30px;top:659.00px;color:#fcfcfc">33 05 c5 7b db ac be 15  7f dc 36 6b d3 bc f1 ce</div>
<div class="a m" style="left:1227.88px;top:659.00px;color:#fcfcfc">3<i>·</i><i>·</i>{<i>·</i><i>·</i><i>·</i><i>·</i> <i>·</i><i>·</i>6k<i>·</i><i>·</i><i>·</i><i>·</i></div>
<div class="a m" style="left:738.82px;top:675.50px;color:#7f8385">0120</div>
<div class="a m" style="left:790.30px;top:675.50px;color:#fcfcfc">bb e5 66 0d 50 13 d9 73  24 af a1 0e 11 30 95 52</div>
<div class="a m" style="left:1227.88px;top:675.50px;color:#fcfcfc"><i>·</i><i>·</i>f<i>·</i>P<i>·</i><i>·</i>s $<i>·</i><i>·</i><i>·</i><i>·</i>0<i>·</i>R</div>
<div class="a m" style="left:738.82px;top:692.00px;color:#7f8385">0130</div>
<div class="a m" style="left:790.30px;top:692.00px;color:#fcfcfc">94 ee ff 4a f9 24 14 cb  0e 99 3f 43 e9 3c 2a 0a</div>
<div class="a m" style="left:1227.88px;top:692.00px;color:#fcfcfc"><i>·</i><i>·</i><i>·</i>J<i>·</i>$<i>·</i><i>·</i> <i>·</i><i>·</i>?C<i>·</i>&lt;*<i>·</i></div>
<div class="a m" style="left:738.82px;top:708.50px;color:#7f8385">0140</div>
<div class="a m" style="left:790.30px;top:708.50px;color:#fcfcfc">1f ed 37 e1 a2 57 a9 2d  a7 05 8c 0e 44 29 e7 1c</div>
<div class="a m" style="left:1227.88px;top:708.50px;color:#fcfcfc"><i>·</i><i>·</i>7<i>·</i><i>·</i>W<i>·</i>- <i>·</i><i>·</i><i>·</i><i>·</i>D)<i>·</i><i>·</i></div>
<div class="a m" style="left:738.82px;top:725.00px;color:#7f8385">0150</div>
<div class="a m" style="left:790.30px;top:725.00px;color:#fcfcfc">f0 19 1d 8a 80 af 88 52  46 4b 1f 7d 3a 6f d2 d4</div>
<div class="a m" style="left:1227.88px;top:725.00px;color:#fcfcfc"><i>·</i><i>·</i><i>·</i><i>·</i><i>·</i><i>·</i><i>·</i>R FK<i>·</i>}:o<i>·</i><i>·</i></div>
<div class="a m" style="left:738.82px;top:741.50px;color:#7f8385">0160</div>
<div class="a m" style="left:790.30px;top:741.50px;color:#fcfcfc">c4 11 f6 20 33 b7 a4 3d  93 b6 c5 0f b1 6d 93 1f</div>
<div class="a m" style="left:1227.88px;top:741.50px;color:#fcfcfc"><i>·</i><i>·</i><i>·</i> 3<i>·</i><i>·</i>= <i>·</i><i>·</i><i>·</i><i>·</i><i>·</i>m<i>·</i><i>·</i></div>
<div class="a m" style="left:738.82px;top:758.00px;color:#7f8385">0170</div>
<div class="a m" style="left:790.30px;top:758.00px;color:#fcfcfc">94 fe 46 b3 db 90 d9 99  a8 c9 c1 83 70 51 00 9d</div>
<div class="a m" style="left:1227.88px;top:758.00px;color:#fcfcfc"><i>·</i><i>·</i>F<i>·</i><i>·</i><i>·</i><i>·</i><i>·</i> <i>·</i><i>·</i><i>·</i><i>·</i>pQ<i>·</i><i>·</i></div>
<div class="a m" style="left:738.82px;top:774.50px;color:#7f8385">0180</div>
<div class="a m" style="left:790.30px;top:774.50px;color:#fcfcfc">67 73 78 93 4c 85 6b d5  64 a5 8a 76 47 a6 f9 ea</div>
<div class="a m" style="left:1227.88px;top:774.50px;color:#fcfcfc">gsx<i>·</i>L<i>·</i>k<i>·</i> d<i>·</i><i>·</i>vG<i>·</i><i>·</i><i>·</i></div>
<div class="a m" style="left:738.82px;top:791.00px;color:#7f8385">0190</div>
<div class="a m" style="left:790.30px;top:791.00px;color:#fcfcfc">bb 96 5d 96 54 62 2e a6  d3 10 d1 6f 2f 64 b4 84</div>
<div class="a m" style="left:1227.88px;top:791.00px;color:#fcfcfc"><i>·</i><i>·</i>]<i>·</i>Tb.<i>·</i> <i>·</i><i>·</i><i>·</i>o/d<i>·</i><i>·</i></div>
<div class="a m" style="left:738.82px;top:807.50px;color:#7f8385">01a0</div>
<div class="a m" style="left:790.30px;top:807.50px;color:#fcfcfc">e4 d1 d1 9c 28 86 98 a7  ca 8f fd d6 b2 6c 1f 0c</div>
<div class="a m" style="left:1227.88px;top:807.50px;color:#fcfcfc"><i>·</i><i>·</i><i>·</i><i>·</i>(<i>·</i><i>·</i><i>·</i> <i>·</i><i>·</i><i>·</i><i>·</i><i>·</i>l<i>·</i><i>·</i></div>
<div class="a m" style="left:738.82px;top:824.00px;color:#7f8385">01b0</div>
<div class="a m" style="left:790.30px;top:824.00px;color:#fcfcfc">ba 5b 58 f3 b0 43 6c 21  d4 22 0d 5b db 6e 6e 6e</div>
<div class="a m" style="left:1227.88px;top:824.00px;color:#fcfcfc"><i>·</i>[X<i>·</i><i>·</i>Cl! <i>·</i>&quot;<i>·</i>[<i>·</i>nnn</div>
<div class="a m" style="left:738.82px;top:840.50px;color:#7f8385">01c0</div>
<div class="a m" style="left:790.30px;top:840.50px;color:#fcfcfc">55 9e fc f4 d2 45 7d 80  ef 59 66 29 c0 8c 51 68</div>
<div class="a m" style="left:1227.88px;top:840.50px;color:#fcfcfc">U<i>·</i><i>·</i><i>·</i><i>·</i>E}<i>·</i> <i>·</i>Yf)<i>·</i><i>·</i>Qh</div>
<div class="a m" style="left:738.82px;top:857.00px;color:#7f8385">01d0</div>
<div class="a m" style="left:790.30px;top:857.00px;color:#fcfcfc">f6 f4 f3 0e ee 66 38 0b  43 86 9f a6 21 cc f9 2d</div>
<div class="a m" style="left:1227.88px;top:857.00px;color:#fcfcfc"><i>·</i><i>·</i><i>·</i><i>·</i><i>·</i>f8<i>·</i> C<i>·</i><i>·</i><i>·</i>!<i>·</i><i>·</i>-</div>
<div class="a m" style="left:738.82px;top:873.50px;color:#7f8385">01e0</div>
<div class="a m" style="left:790.30px;top:873.50px;color:#fcfcfc">e3 49 96 19 f5 f2 4e 66  c3 73 4d a3 3e 01 c7 32</div>
<div class="a m" style="left:1227.88px;top:873.50px;color:#fcfcfc"><i>·</i>I<i>·</i><i>·</i><i>·</i><i>·</i>Nf <i>·</i>sM<i>·</i>&gt;<i>·</i><i>·</i>2</div>
<div class="a m" style="left:738.82px;top:890.00px;color:#7f8385">01f0</div>
<div class="a m" style="left:790.30px;top:890.00px;color:#fcfcfc">27 e6 f1 1b c4 ff 8e be  ac 07 55 10 41 87 5e 92</div>
<div class="a m" style="left:1227.88px;top:890.00px;color:#fcfcfc">&#x27;<i>·</i><i>·</i><i>·</i><i>·</i><i>·</i><i>·</i><i>·</i> <i>·</i><i>·</i>U<i>·</i>A<i>·</i>^<i>·</i></div>
<div class="a m" style="left:738.82px;top:906.50px;color:#7f8385">0200</div>
<div class="a m" style="left:790.30px;top:906.50px;color:#fcfcfc">d0 7b c9 1c 5d fa ec 4a  6a 13</div>
<div class="a m" style="left:1227.88px;top:906.50px;color:#fcfcfc"><i>·</i>{<i>·</i><i>·</i>]<i>·</i><i>·</i>J j<i>·</i></div>
<div class="a" style="left:1px;top:936px;width:1459px;height:1px;background:#54595e"></div>
<div class="a" style="left:1px;top:937px;width:1459px;height:25px;background:#2a2e32"></div>
<div class="a" style="left:0;top:962px;width:1460px;height:1px;background:#54595e"></div>
<svg class="a" style="left:11px;top:940px" width="17" height="17" viewBox="0 0 17 17"><defs><radialGradient id="yel" cx="0.45" cy="0.35" r="0.7"><stop offset="0" stop-color="#f0ee9a"/><stop offset="1" stop-color="#cfc93a"/></radialGradient></defs><circle cx="8.5" cy="8.5" r="7.3" fill="url(#yel)"/></svg>
<svg class="a" style="left:37px;top:940px" width="17" height="17" viewBox="0 0 17 17">
<rect x="0.8" y="1" width="11.4" height="15" fill="#e4e4e0"/>
<path d="M0.8,1 H12.2 V4.4 H0.8Z" fill="#3b9fe0"/>
<path d="M3.5,4.4 L6,1.6 L6.6,4.4Z" fill="#f4f6f8"/>
<path d="M6.6,10.2 L14.2,2.6" stroke="#55575a" stroke-width="2.6" stroke-linecap="round"/>
<path d="M5.4,11.4 L7.2,9.6" stroke="#2e3032" stroke-width="2.8" stroke-linecap="round"/>
</svg>
<div class="a s" style="left:71.2px;top:941px;color:#fcfcfc;letter-spacing:-0.06px">wireshark_enp0s13f0u3u1SSiwmB.pcapng</div>
<div class="a" style="left:924px;top:940px;width:1px;height:19px;background:#4a4e52"></div>
<div class="a s" style="left:938.2px;top:941px;color:#fcfcfc;letter-spacing:-0.2px">Packets: 7 · Dropped: 0 (0.0%)</div>
<div class="a" style="left:1320px;top:940px;width:1px;height:19px;background:#4a4e52"></div>
<div class="a s" style="left:1333.2px;top:941px;color:#fcfcfc;letter-spacing:0.12px">Profile: Default</div>
</body></html>
